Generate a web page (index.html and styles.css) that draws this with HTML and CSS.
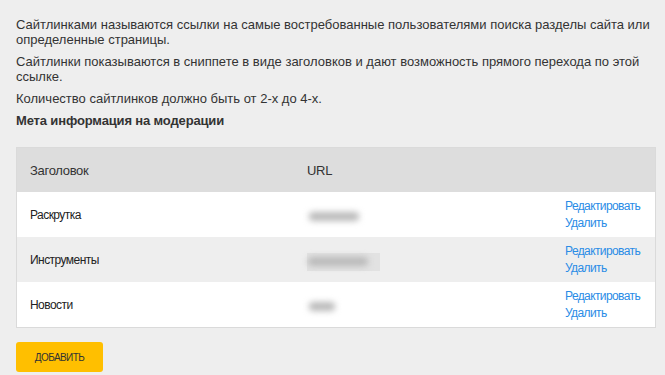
FILE: index.html
```html
<!DOCTYPE html>
<html lang="ru">
<head>
<meta charset="utf-8">
<title>Сайтлинки</title>
<link rel="stylesheet" href="styles.css">
</head>
<body>
<div class="page">
  <p class="text">Сайтлинками называются ссылки на самые востребованные пользователями поиска разделы сайта или определенные страницы.</p>
  <p class="text">Сайтлинки показываются в сниппете в виде заголовков и дают возможность прямого перехода по этой ссылке.</p>
  <p class="text">Количество сайтлинков должно быть от 2-х до 4-х.</p>
  <h2 class="title">Мета информация на модерации</h2>
  <div class="table">
    <div class="row head">
      <div class="cell">Заголовок</div>
      <div class="cell">URL</div>
      <div class="cell"></div>
    </div>
    <div class="row">
      <div class="cell">Раскрутка</div>
      <div class="cell"><span class="blur w1"></span></div>
      <div class="cell actions"><a href="#" class="link">Редактировать</a><a href="#" class="link">Удалить</a></div>
    </div>
    <div class="row alt">
      <div class="cell">Инструменты</div>
      <div class="cell"><span class="blurbox"><span class="blur w2"></span></span></div>
      <div class="cell actions"><a href="#" class="link">Редактировать</a><a href="#" class="link">Удалить</a></div>
    </div>
    <div class="row">
      <div class="cell">Новости</div>
      <div class="cell"><span class="blur w3"></span></div>
      <div class="cell actions"><a href="#" class="link">Редактировать</a><a href="#" class="link">Удалить</a></div>
    </div>
  </div>
  <button class="btn" type="button">Добавить</button>
</div>
</body>
</html>
```

FILE: styles.css
```css
html, body {
  margin: 0;
  padding: 0;
  background: #eeeeee;
}
body {
  font-family: "Liberation Sans", Arial, sans-serif;
  font-size: 13px;
  color: #333333;
}
.page {
  padding: 17px 9px 0 16px;
  display: flex;
  flex-direction: column;
  align-items: flex-start;
}
.text {
  margin: 0 0 7px 0;
  line-height: 15px;
}
.title {
  margin: 0 0 19px 0;
  font-size: 13px;
  line-height: 15px;
  font-weight: bold;
  letter-spacing: -0.15px;
}
.table {
  width: 638px;
  border: 1px solid #dadada;
  background: #ffffff;
}
.row {
  display: grid;
  grid-template-columns: 277px 258px 1fr;
  padding-left: 13px;
  height: 45px;
  align-items: center;
  background: #ffffff;
  font-size: 12px;
  letter-spacing: -0.55px;
  color: #222222;
}
.row.head {
  background: #dddddd;
  height: 44px;
  font-size: 13px;
  letter-spacing: -0.3px;
  color: #333333;
}
.row.alt {
  background: #eeeeee;
}
.cell {
  display: flex;
  align-items: center;
}
.actions {
  flex-direction: column;
  align-items: flex-start;
}
.link {
  font-size: 12px;
  line-height: 17px;
  letter-spacing: -0.6px;
  color: #2a8ce6;
  text-decoration: none;
}
.blur {
  display: block;
  height: 9px;
  border-radius: 4px;
  background: #b9b9b9;
  filter: blur(3px);
  margin-top: 3px;
}
.w1 { width: 50px; margin-left: 2px; }
.w2 { width: 60px; margin-left: 1px; margin-top: 0; }
.w3 { width: 26px; margin-left: 2px; }
.blurbox {
  display: flex;
  align-items: center;
  width: 73px;
  height: 18px;
  background: #e2e2e2;
  margin-top: 4px;
}
.btn {
  margin-top: 14px;
  width: 87px;
  height: 30px;
  border: none;
  border-radius: 3px;
  background: #ffbf00;
  color: #333333;
  font-family: "Liberation Sans", Arial, sans-serif;
  font-size: 10px;
  letter-spacing: -0.6px;
  text-transform: uppercase;
  padding: 0;
  cursor: pointer;
}
```
